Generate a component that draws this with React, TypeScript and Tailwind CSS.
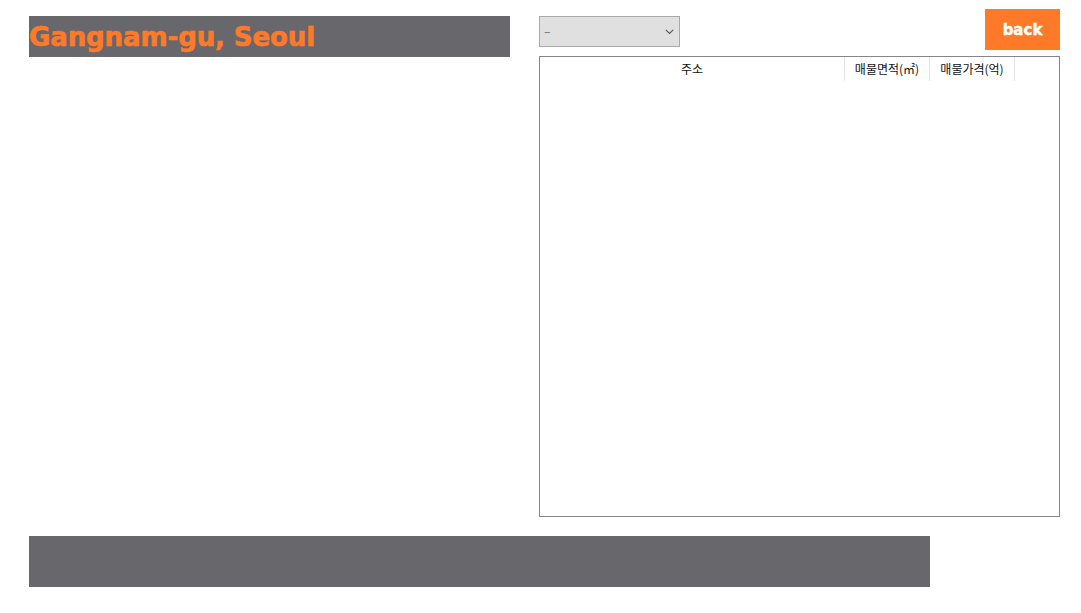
import React from 'react';

const columns = [
  { label: '주소', width: 'w-[305px]' },
  { label: '매물면적(㎡)', width: 'w-[85px]' },
  { label: '매물가격(억)', width: 'w-[85px]' },
];

export default function App() {
  return (
    <div className="min-h-screen bg-white pt-[9px] pl-[29px] font-['Noto_Sans_CJK_KR',sans-serif]">
      <div className="flex items-start gap-[29px]">
        {/* 지역 타이틀 */}
        <div className="mt-[7px] h-[41px] w-[481px] bg-[#68686c] pt-[6px]">
          <h1 className="font-['DejaVu_Sans',sans-serif] text-[26px] font-bold leading-[30px] tracking-[-0.1px] text-[#ff7a28] [-webkit-text-stroke:0.6px_#ff7a28]">
            Gangnam-gu, Seoul
          </h1>
        </div>

        <div className="flex w-[521px] flex-col">
          <div className="flex items-start justify-between">
            <div className="relative mt-[7px] h-[31px] w-[141px] border border-[#a9a9a9] bg-[#e0e0e0]">
              <select className="h-full w-full appearance-none bg-transparent pl-[4px] font-['Liberation_Sans',sans-serif] text-[12px] tracking-[-1.5px] text-[#7d8590] outline-none">
                <option>--</option>
              </select>
              <svg
                className="pointer-events-none absolute right-[5px] top-[12px]"
                width="9"
                height="6"
                viewBox="0 0 9 6"
              >
                <path d="M0.8 0.8 L4.5 4.5 L8.2 0.8" fill="none" stroke="#555" strokeWidth="1.1" />
              </svg>
            </div>
            <button className="flex h-[41px] w-[75px] items-center justify-center pt-[2px] bg-[#ff7a28] font-['DejaVu_Sans',sans-serif] text-[15px] font-bold text-white [-webkit-text-stroke:0.4px_#ffffff]">
              back
            </button>
          </div>

          {/* 매물 목록 */}
          <div className="mt-[6px] h-[461px] border border-[#85858c] bg-white">
            <div className="flex h-[24px]">
              {columns.map((c) => (
                <div
                  key={c.label}
                  className={`${c.width} flex items-center justify-center border-r border-[#e4e4e4] text-[12px] text-[#111]`}
                >
                  {c.label}
                </div>
              ))}
            </div>
          </div>
        </div>
      </div>

      <div className="mt-[19px] h-[51px] w-[901px] bg-[#68686c]" />
    </div>
  );
}
